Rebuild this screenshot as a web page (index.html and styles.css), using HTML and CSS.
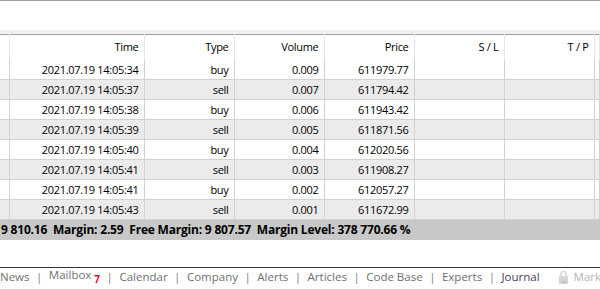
FILE: index.html
```html
<!DOCTYPE html>
<html lang="en">
<head>
  <meta charset="UTF-8" />
  <title>Trade</title>
  <link rel="stylesheet" href="styles.css">
</head>
<body>
  <div class="toolbar"></div>
  <div class="gap"></div>

  <!-- Bảng lệnh -->
  <table class="trades">
    <colgroup>
      <col class="c-first"><col class="c-time"><col class="c-num"><col class="c-num">
      <col class="c-num"><col class="c-num"><col class="c-num"><col>
    </colgroup>
    <thead>
      <tr>
        <th></th><th>Time</th><th>Type</th><th>Volume</th><th>Price</th><th>S / L</th><th>T / P</th><th></th>
      </tr>
    </thead>
    <tbody id="rows"></tbody>
  </table>

  <div class="status">9 810.16&nbsp;&nbsp;Margin: 2.59&nbsp;&nbsp;Free Margin: 9 807.57&nbsp;&nbsp;Margin Level: 378 770.66 %</div>

  <div class="tabs">
    <span class="tab">News</span><span class="sep">|</span>
    <span class="tab">Mailbox<sub class="count">7</sub></span><span class="sep">|</span>
    <span class="tab">Calendar</span><span class="sep">|</span>
    <span class="tab">Company</span><span class="sep">|</span>
    <span class="tab">Alerts</span><span class="sep">|</span>
    <span class="tab">Articles</span><span class="sep">|</span>
    <span class="tab">Code Base</span><span class="sep">|</span>
    <span class="tab">Experts</span><span class="sep">|</span>
    <span class="tab active">Journal</span>
    <span class="tab market">
      <svg width="9" height="14" viewBox="0 0 9 14">
        <path d="M2 6V4a2.5 2.5 0 0 1 5 0v2" fill="none" stroke="#c8c8c8" stroke-width="1.2"/>
        <rect x="0" y="6" width="9" height="8" fill="#d6d6d6"/>
        <path d="M2 13l2-3 1.5 2 1-1 1.5 2z" fill="#bdbdbd"/>
      </svg>
      Market
    </span>
  </div>

  <script>
    const trades = [
      ['2021.07.19 14:05:34', 'buy', '0.009', '611979.77'],
      ['2021.07.19 14:05:37', 'sell', '0.007', '611794.42'],
      ['2021.07.19 14:05:38', 'buy', '0.006', '611943.42'],
      ['2021.07.19 14:05:39', 'sell', '0.005', '611871.56'],
      ['2021.07.19 14:05:40', 'buy', '0.004', '612020.56'],
      ['2021.07.19 14:05:41', 'sell', '0.003', '611908.27'],
      ['2021.07.19 14:05:41', 'buy', '0.002', '612057.27'],
      ['2021.07.19 14:05:43', 'sell', '0.001', '611672.99']
    ];
    const body = document.getElementById('rows');
    trades.forEach(t => {
      const tr = document.createElement('tr');
      tr.innerHTML = '<td></td>' + t.map(v => '<td>' + v + '</td>').join('') + '<td></td><td></td><td></td>';
      body.appendChild(tr);
    });
  </script>
</body>
</html>
```

FILE: styles.css
```css
body {
  margin: 0;
  width: 600px;
  height: 289px;
  overflow: hidden;
  font-family: 'Open Sans', 'Noto Sans', sans-serif;
  font-size: 11px;
  letter-spacing: -0.3px;
  color: #000;
  background: #fff;
}

.toolbar {
  height: 29px;
  border-top: 1px solid #a0a0a0;
}

.gap {
  height: 4px;
  background: #f0f0f0;
}

.trades {
  width: 600px;
  table-layout: fixed;
  border-collapse: collapse;
  border-top: 1px solid #a0a0a0;
}

.c-first { width: 9px; }
.c-time { width: 135px; }
.c-num { width: 90px; }

.trades th {
  height: 23px;
  padding: 0 5px 2px 0;
  text-align: right;
  font-weight: normal;
  border-right: 1px solid #e6e6e6;
  white-space: nowrap;
}

.trades td {
  height: 19px;
  padding: 0 5px 0 0;
  text-align: right;
  border-right: 1px solid #d2d2d2;
  border-bottom: 1px solid #d2d2d2;
  white-space: nowrap;
}

.trades tbody tr:nth-child(even) td {
  background: #ebebeb;
}

.status {
  height: 20px;
  line-height: 20px;
  background: #c8c8c8;
  font-weight: bold;
  font-size: 12px;
  letter-spacing: -0.2px;
  white-space: nowrap;
  padding-left: 1px;
}

.tabs {
  margin-top: 27px;
  height: 17px;
  padding-bottom: 5px;
  border-top: 1px solid #333;
  border-bottom: 1px solid #bdbdbd;
  display: flex;
  align-items: center;
  font-size: 11.5px;
  letter-spacing: 0;
  color: #707070;
  white-space: nowrap;
  overflow: hidden;
}

.sep {
  margin: 0 6.5px;
  color: #808080;
}

.count {
  color: #e81123;
  font-size: 10px;
  font-weight: bold;
  margin-left: 3px;
}

.active {
  color: #4b3a63;
}

.market {
  margin-left: 19px;
  color: #b4b4b4;
  display: flex;
  align-items: center;
  gap: 6px;
}
```
